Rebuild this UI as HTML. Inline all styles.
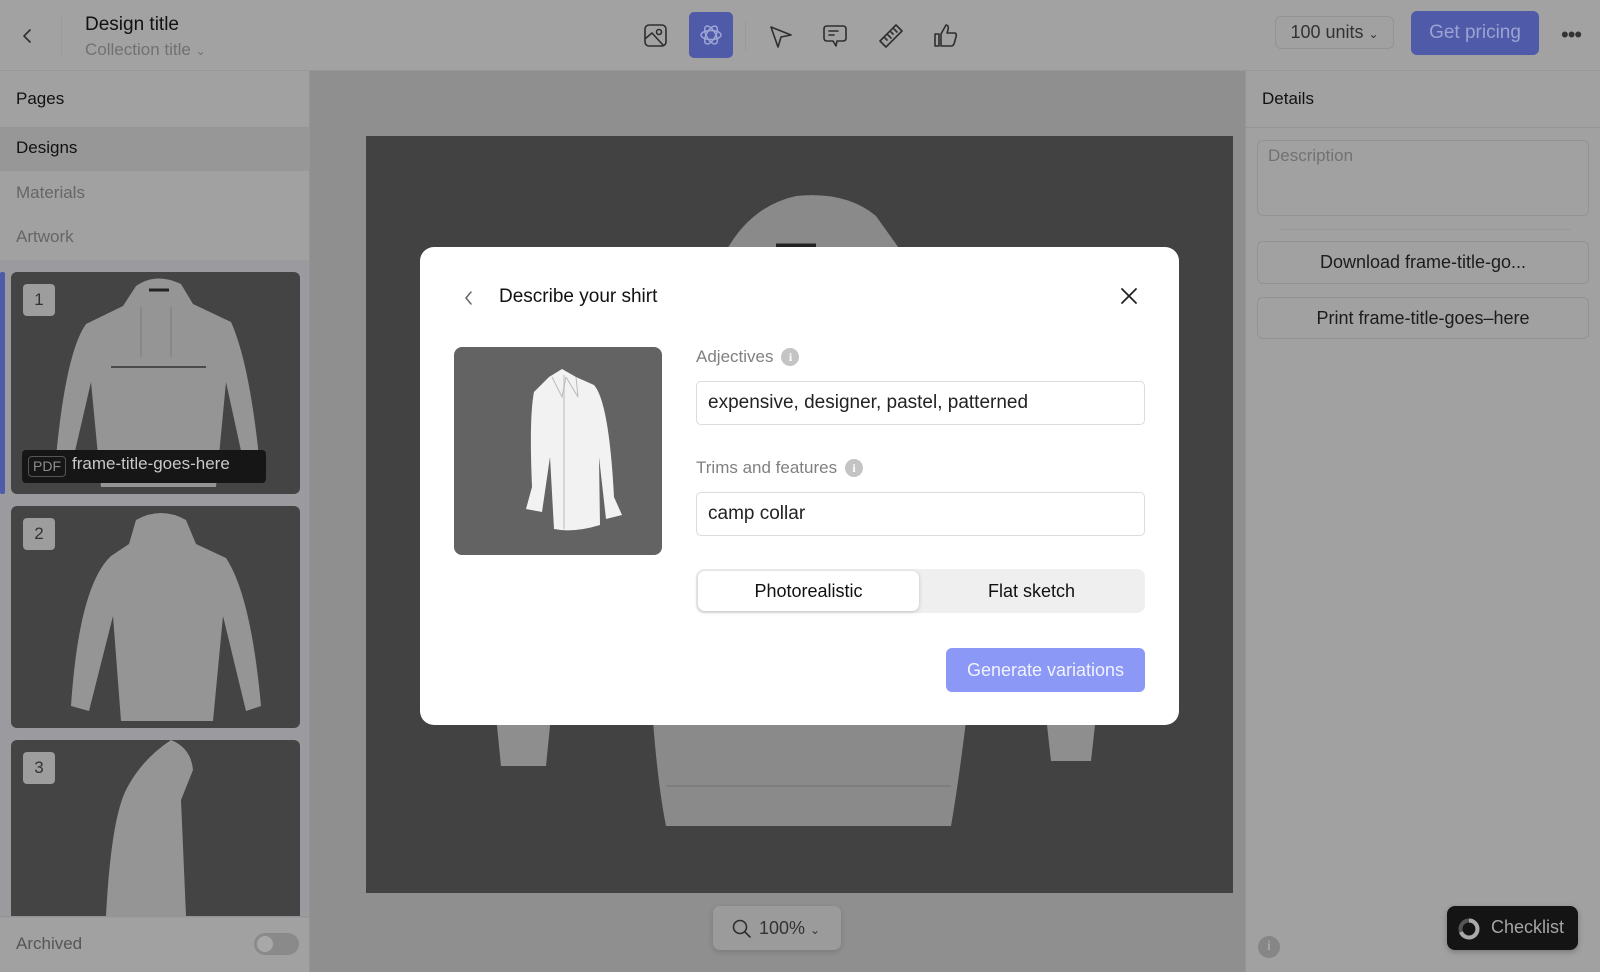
<!DOCTYPE html>
<html><head><meta charset="utf-8"><style>
*{box-sizing:border-box;margin:0;padding:0}
body{width:1600px;height:972px;overflow:hidden;background:#8f8f8f;font-family:"Liberation Sans",sans-serif;position:relative;color:#1a1a1a}
.a{position:absolute}
.top{left:0;top:0;width:1600px;height:71px;background:#a2a2a2;border-bottom:1px solid #979797}
.side{left:0;top:71px;width:310px;height:901px;background:#a1a1a1;border-right:1px solid #959595}
.right{left:1245px;top:71px;width:355px;height:901px;background:#a1a1a1;border-left:1px solid #959595}
.thumb{background:#444;border-radius:6px;overflow:hidden}
.num{width:32px;height:32px;border-radius:4px;background:#9d9d9d;color:#333;font-size:17px;text-align:center;line-height:32px}
.btn{border:1px solid #939393;border-radius:6px;background:#a1a1a1;text-align:center;font-size:18px;color:#1c1c1c}
.ic{stroke:#2e2e2e;fill:none;stroke-width:1.6;stroke-linecap:round;stroke-linejoin:round}
.modal{left:420px;top:247px;width:759px;height:478px;background:#fff;border-radius:14px}
.lbl{font-size:17px;color:#808080}
.info{display:inline-block;width:18px;height:18px;border-radius:50%;background:#c4c4c4;color:#fff;font-size:12px;font-weight:bold;text-align:center;line-height:18px;vertical-align:1px;margin-left:8px;font-family:"Liberation Serif",serif}
.inp{width:449px;height:44px;border:1px solid #dcdcdc;border-radius:5px;font-size:19px;padding:0 11px;line-height:42px;color:#222}
</style></head><body>

<div class="a top">
  <svg class="a" style="left:20px;top:27px" width="16" height="18"><path class="ic" d="M10 3 L4 9 L10 15"/></svg>
  <div class="a" style="left:61px;top:18px;width:1px;height:36px;background:#9a9a9a"></div>
  <div class="a" style="left:85px;top:14px;font-size:19px;color:#111">Design title</div>
  <div class="a" style="left:85px;top:40px;font-size:17px;color:#717171">Collection title <span style="font-size:12px">⌄</span></div>
  <svg class="a" style="left:643px;top:23px" width="26" height="26"><rect class="ic" x="2" y="2" width="21" height="21" rx="4"/><circle class="ic" cx="16" cy="9" r="2.5"/><path class="ic" d="M3 15 L9 10 L20 22"/></svg>
  <div class="a" style="left:689px;top:12px;width:44px;height:46px;background:#4f5ba8;border-radius:5px"></div>
  <svg class="a" style="left:699px;top:23px" width="24" height="24"><ellipse cx="12" cy="12" rx="10" ry="4.5" fill="none" stroke="#9da5d6" stroke-width="1.5" transform="rotate(60 12 12)"/><ellipse cx="12" cy="12" rx="10" ry="4.5" fill="none" stroke="#9da5d6" stroke-width="1.5" transform="rotate(-60 12 12)"/><ellipse cx="12" cy="12" rx="10" ry="4.5" fill="none" stroke="#9da5d6" stroke-width="1.5"/></svg>
  <div class="a" style="left:745px;top:20px;width:1px;height:32px;background:#9a9a9a"></div>
  <svg class="a" style="left:768px;top:24px" width="26" height="26"><path class="ic" d="M3 3 L23 11 L13 13 L10 23 Z"/></svg>
  <svg class="a" style="left:821px;top:23px" width="28" height="28"><path class="ic" d="M6 3 H22 Q25 3 25 6 V15 Q25 18 22 18 H16 L15 23 L12 18 H6 Q3 18 3 15 V6 Q3 3 6 3 Z"/><path class="ic" d="M8 8 H17 M8 12 H13"/></svg>
  <svg class="a" style="left:877px;top:22px" width="28" height="28"><path class="ic" d="M3 19 L19 3 L25 9 L9 25 Z M8 16 L10 18 M11 13 L14 16 M14 10 L16 12 M17 7 L20 10"/></svg>
  <svg class="a" style="left:932px;top:22px" width="28" height="28"><path class="ic" d="M3 12 H7 V24 H3 Z M9 12 L14 3 Q17 3 16 8 L15 11 H23 Q25 12 24 15 L22 22 Q21 24 19 24 H9 Z"/></svg>
  <div class="a btn" style="left:1275px;top:16px;width:119px;height:33px;line-height:31px;font-size:18px;color:#333">100 units <span style="font-size:12px">⌄</span></div>
  <div class="a" style="left:1411px;top:11px;width:128px;height:44px;background:#4f5ba8;border-radius:6px;color:#9aa3d3;font-size:19px;text-align:center;line-height:44px">Get pricing</div>
  <div class="a" style="left:1561px;top:22px;font-size:22px;color:#333;letter-spacing:-1px">•••</div>
</div>

<div class="a side">
  <div class="a" style="left:16px;top:18px;font-size:17px;color:#111">Pages</div>
  <div class="a" style="left:0;top:56px;width:310px;height:1px;background:#959595"></div>
  <div class="a" style="left:0;top:57px;width:309px;height:43px;background:#979797"></div>
  <div class="a" style="left:16px;top:67px;font-size:17px;color:#111">Designs</div>
  <div class="a" style="left:16px;top:112px;font-size:17px;color:#666">Materials</div>
  <div class="a" style="left:16px;top:156px;font-size:17px;color:#666">Artwork</div>
  <div class="a" style="left:0;top:189px;width:309px;height:658px;background:#9a9a9f"></div>
  <div class="a" style="left:0;top:201px;width:5px;height:222px;background:#4f5ba8;border-radius:2px"></div>
</div>
<div class="a thumb" style="left:11px;top:272px;width:289px;height:222px">
  <svg width="289" height="222"><path d="M125 14 Q145 0 170 12 L182 32 L220 50 Q238 90 248 185 L232 188 L215 110 L205 215 L90 215 L80 110 L62 188 L45 185 Q55 80 75 52 L112 34 Z" fill="#959595"/><path d="M138 18 H158" stroke="#222" stroke-width="3"/><path d="M130 35 V85 M160 35 V85" stroke="#888" stroke-width="2"/><path d="M100 95 H195" stroke="#333" stroke-width="1.5"/></svg>
  <div class="a num" style="left:12px;top:12px">1</div>
  <div class="a" style="left:11px;top:178px;width:244px;height:33px;background:#161616;border-radius:4px"></div>
  <div class="a" style="left:17px;top:184px;width:38px;height:21px;border:1px solid #555;border-radius:4px;color:#8d8d8d;font-size:14px;text-align:center;line-height:19px">PDF</div>
  <div class="a" style="left:61px;top:182px;font-size:17px;color:#c8c8c8">frame-title-goes-here</div>
</div>
<div class="a thumb" style="left:11px;top:506px;width:289px;height:222px">
  <svg width="289" height="222"><path d="M125 14 Q150 0 175 14 L185 38 L215 52 Q240 90 250 200 L235 205 L212 110 L202 215 L110 215 L102 110 L78 205 L60 200 Q68 80 100 50 L118 38 Z" fill="#959595"/></svg>
  <div class="a num" style="left:12px;top:12px">2</div>
</div>
<div class="a thumb" style="left:11px;top:740px;width:289px;height:176px;border-radius:6px 6px 0 0">
  <svg width="289" height="176"><path d="M160 0 Q180 8 182 30 L170 60 L175 176 L95 176 Q100 80 115 50 Q130 20 160 0 Z" fill="#959595"/></svg>
  <div class="a num" style="left:12px;top:12px">3</div>
</div>
<div class="a" style="left:0;top:916px;width:309px;height:1px;background:#959595"></div>
<div class="a" style="left:16px;top:934px;font-size:17px;color:#555">Archived</div>
<div class="a" style="left:254px;top:933px;width:45px;height:22px;border-radius:11px;background:#8a8a8a"><div style="margin:3px;width:16px;height:16px;border-radius:50%;background:#a8a8a8"></div></div>

<div class="a" style="left:366px;top:136px;width:867px;height:757px;background:#424242;overflow:hidden">
  <svg width="867" height="757"><path d="M360 115 Q385 70 430 60 Q480 55 510 80 L535 115 Z" fill="#8a8a8a"/><path d="M410 110 H450" stroke="#222" stroke-width="5"/><path d="M130 580 L185 580 L180 630 L135 630 Z M680 580 L730 580 L725 625 L685 625 Z" fill="#8e8e8e"/><path d="M287 585 L600 585 Q592 650 585 690 L300 690 Q292 650 287 585 Z" fill="#8a8a8a"/><path d="M300 650 H585" stroke="#7e7e7e" stroke-width="2"/></svg>
</div>
<div class="a" style="left:713px;top:906px;width:128px;height:44px;background:#9b9b9b;border-radius:7px;box-shadow:0 2px 6px rgba(0,0,0,.15)"></div>
<svg class="a" style="left:731px;top:918px" width="22" height="22"><circle class="ic" cx="9" cy="9" r="6.5"/><path class="ic" d="M14 14 L19 19"/></svg>
<div class="a" style="left:759px;top:918px;font-size:18px;color:#333">100% <span style="font-size:12px">⌄</span></div>

<div class="a right">
  <div class="a" style="left:16px;top:18px;font-size:17px;color:#111">Details</div>
  <div class="a" style="left:0;top:56px;width:355px;height:1px;background:#959595"></div>
  <div class="a" style="left:11px;top:69px;width:332px;height:76px;border:1px solid #939393;border-radius:6px"></div>
  <div class="a" style="left:22px;top:75px;font-size:17px;color:#727272">Description</div>
  <div class="a" style="left:35px;top:158px;width:290px;height:1px;background:#989898"></div>
  <div class="a btn" style="left:11px;top:170px;width:332px;height:43px;line-height:41px">Download frame-title-go...</div>
  <div class="a btn" style="left:11px;top:226px;width:332px;height:42px;line-height:40px">Print frame-title-goes–here</div>
  <div class="a" style="left:12px;top:865px;width:22px;height:22px;border-radius:50%;background:#868686;color:#a5a5a5;font-size:14px;font-weight:bold;text-align:center;line-height:22px;font-family:'Liberation Serif',serif">i</div>
</div>
<div class="a" style="left:1447px;top:906px;width:131px;height:44px;background:#141414;border-radius:8px;box-shadow:0 2px 6px rgba(0,0,0,.25)"></div>
<svg class="a" style="left:1457px;top:917px" width="24" height="24"><circle cx="12" cy="12" r="8.5" fill="none" stroke="#555" stroke-width="4"/><path d="M12 3.5 A8.5 8.5 0 1 1 4 15" fill="none" stroke="#aaa" stroke-width="4"/></svg>
<div class="a" style="left:1491px;top:917px;font-size:18px;color:#a5a5a5">Checklist</div>

<div class="a modal">
  <svg class="a" style="left:42px;top:42px" width="14" height="18"><path d="M9 3 L4 9 L9 15" fill="none" stroke="#666" stroke-width="1.5" stroke-linecap="round"/></svg>
  <div class="a" style="left:79px;top:39px;font-size:19px;color:#111">Describe your shirt</div>
  <svg class="a" style="left:699px;top:39px" width="20" height="20"><path d="M3 3 L17 17 M17 3 L3 17" stroke="#222" stroke-width="1.8" stroke-linecap="round"/></svg>
  <div class="a" style="left:34px;top:100px;width:208px;height:208px;background:#636363;border-radius:8px;overflow:hidden">
    <svg width="208" height="208"><path d="M95 30 L108 22 L122 30 L140 38 Q155 55 160 150 L168 168 L152 172 L145 110 L146 178 Q120 186 100 182 L96 110 L88 165 L72 162 L78 140 Q75 70 80 45 Z" fill="#f2f2f2"/><path d="M110 28 L110 182" stroke="#ccc" stroke-width="1.5" fill="none"/><path d="M98 30 L108 50 L112 30 M112 30 L124 50 L122 30" stroke="#bbb" fill="none"/></svg>
  </div>
  <div class="a lbl" style="left:276px;top:100px">Adjectives<span class="info">i</span></div>
  <div class="a inp" style="left:276px;top:134px">expensive, designer, pastel, patterned</div>
  <div class="a lbl" style="left:276px;top:211px">Trims and features<span class="info">i</span></div>
  <div class="a inp" style="left:276px;top:245px">camp collar</div>
  <div class="a" style="left:276px;top:322px;width:449px;height:44px;background:#efefef;border-radius:8px"></div>
  <div class="a" style="left:278px;top:324px;width:221px;height:40px;background:#fff;border-radius:7px;box-shadow:0 1px 4px rgba(0,0,0,.2);text-align:center;line-height:40px;font-size:18px;color:#111">Photorealistic</div>
  <div class="a" style="left:500px;top:324px;width:223px;height:40px;text-align:center;line-height:40px;font-size:18px;color:#111">Flat sketch</div>
  <div class="a" style="left:526px;top:401px;width:199px;height:44px;background:#8b98f5;border-radius:6px;color:#f0f2ff;font-size:18px;text-align:center;line-height:44px">Generate variations</div>
</div>
</body></html>
